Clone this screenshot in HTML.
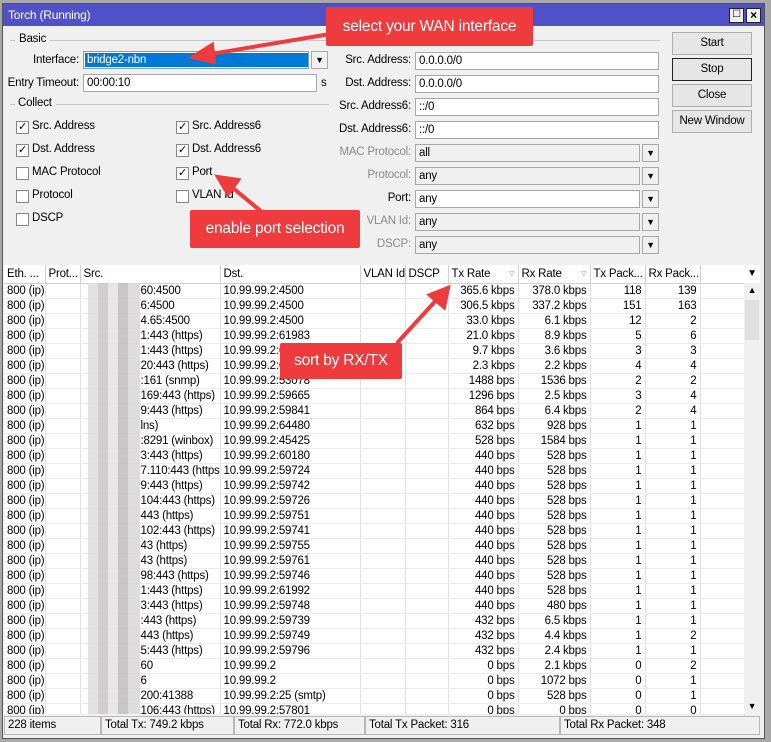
<!DOCTYPE html>
<html><head><meta charset="utf-8">
<style>
*{box-sizing:border-box;margin:0;padding:0}
body{width:771px;height:742px;background:#a9a9a9;font-family:"Liberation Sans",Arial,sans-serif;font-size:11.5px;color:#000;position:relative;overflow:hidden;letter-spacing:-0.2px}
.win{position:absolute;left:2px;top:3px;width:763px;height:736px;background:#f0f0f0;border:1px solid #555}
.title{position:absolute;left:3px;top:4px;width:761px;height:22px;background:#5050c8;color:#fff;font-size:12px;padding:4px 0 0 5px}
.tb{position:absolute;top:8px;width:15px;height:15px;background:#f0f0f0;border:1px solid #222}
.a{position:absolute;white-space:nowrap}
.lbl{position:absolute;text-align:right;white-space:nowrap}
.gray{color:#8a8a8a}
.inp{position:absolute;height:18px;background:#fff;border:1px solid #a8a8a8;padding:0 0 0 3px;line-height:16px;white-space:nowrap}
.dis{background:#f0f0f0}
.dd{position:absolute;width:17px;height:18px;border:1px solid #a8a8a8;background:#f0f0f0;text-align:center;font-size:9px;line-height:16px}
.cb{position:absolute;width:13px;height:13px;border:1px solid #888;background:#fff;font-size:11px;line-height:11px;text-align:center}
.grp{position:absolute;height:1px;background:#c8c8c8}
.btn{position:absolute;left:672px;width:80px;height:23px;border:1px solid #adadad;background:#e6e6e6;text-align:center;line-height:21px}
.red{position:absolute;background:#ef3b3e;color:#fff;font-size:15.5px;text-align:center;border-radius:2px}
table{position:absolute;left:4px;top:265px;width:740px;border-collapse:collapse;table-layout:fixed;background:#fff}
td,th{height:15px;font-weight:normal;white-space:nowrap;overflow:hidden;border-right:1px solid #e0e0e0;padding:0 3px;line-height:14px;text-align:left}
th{height:18px;background:#fff;border-right:1px solid #d0d0d0;border-bottom:1px solid #d0d0d0}
td.r{text-align:right}
tr.b td{border-bottom:1px solid #ececec}
.sb{position:absolute;left:744px;top:265px;width:16px;height:449px;background:#f0f0f0}
.status{position:absolute;top:716px;height:19px;border:1px solid #b8b8b8;padding:2px 0 0 3px;background:#f0f0f0}
</style></head><body>
<div class="win"></div>
<div class="title">Torch (Running)</div>
<div class="tb" style="left:729px;font-size:10px;line-height:12px;text-align:center">☐</div>
<div class="tb" style="left:746px;font-size:12px;line-height:12px;text-align:center;font-weight:bold">×</div>

<div class="grp" style="left:10px;top:40px;width:5px"></div><div class="a" style="left:19px;top:33px">Basic</div><div class="grp" style="left:50px;top:40px;width:610px"></div>
<div class="lbl" style="right:692px;top:54px">Interface:</div>
<div class="inp" style="left:83px;top:51px;width:226px;border-color:#7aa"><span style="background:#0078d7;color:#fff;display:block;margin:1px 0 0 -2px;padding-left:2px;height:14px;line-height:14px">bridge2-nbn</span></div>
<div class="dd" style="left:311px;top:51px">▼</div>
<div class="lbl" style="right:692px;top:77px">Entry Timeout:</div>
<div class="inp" style="left:83px;top:74px;width:234px">00:00:10</div>
<div class="a" style="left:321px;top:77px">s</div>
<div class="grp" style="left:10px;top:104px;width:5px"></div><div class="a" style="left:18px;top:97px">Collect</div><div class="grp" style="left:56px;top:104px;width:273px"></div>

<div class="cb" style="left:16px;top:121px">✓</div><div class="a" style="left:32px;top:120px">Src. Address</div>
<div class="cb" style="left:16px;top:144px">✓</div><div class="a" style="left:32px;top:143px">Dst. Address</div>
<div class="cb" style="left:16px;top:167px"></div><div class="a" style="left:32px;top:166px">MAC Protocol</div>
<div class="cb" style="left:16px;top:190px"></div><div class="a" style="left:32px;top:189px">Protocol</div>
<div class="cb" style="left:16px;top:213px"></div><div class="a" style="left:32px;top:212px">DSCP</div>
<div class="cb" style="left:176px;top:121px">✓</div><div class="a" style="left:192px;top:120px">Src. Address6</div>
<div class="cb" style="left:176px;top:144px">✓</div><div class="a" style="left:192px;top:143px">Dst. Address6</div>
<div class="cb" style="left:176px;top:167px">✓</div><div class="a" style="left:192px;top:166px">Port</div>
<div class="cb" style="left:176px;top:190px"></div><div class="a" style="left:192px;top:189px">VLAN Id</div>

<div class="lbl" style="right:360px;top:54px">Src. Address:</div><div class="inp" style="left:415px;top:52px;width:244px">0.0.0.0/0</div>
<div class="lbl" style="right:360px;top:77px">Dst. Address:</div><div class="inp" style="left:415px;top:75px;width:244px">0.0.0.0/0</div>
<div class="lbl" style="right:360px;top:100px">Src. Address6:</div><div class="inp" style="left:415px;top:98px;width:244px">::/0</div>
<div class="lbl" style="right:360px;top:123px">Dst. Address6:</div><div class="inp" style="left:415px;top:121px;width:244px">::/0</div>
<div class="lbl gray" style="right:360px;top:146px">MAC Protocol:</div><div class="inp dis" style="left:415px;top:144px;width:225px">all</div><div class="dd" style="left:642px;top:144px">▼</div>
<div class="lbl gray" style="right:360px;top:169px">Protocol:</div><div class="inp dis" style="left:415px;top:167px;width:225px">any</div><div class="dd" style="left:642px;top:167px">▼</div>
<div class="lbl" style="right:360px;top:192px">Port:</div><div class="inp" style="left:415px;top:190px;width:225px">any</div><div class="dd" style="left:642px;top:190px">▼</div>
<div class="lbl gray" style="right:360px;top:215px">VLAN Id:</div><div class="inp dis" style="left:415px;top:213px;width:225px">any</div><div class="dd" style="left:642px;top:213px">▼</div>
<div class="lbl gray" style="right:360px;top:238px">DSCP:</div><div class="inp dis" style="left:415px;top:236px;width:225px">any</div><div class="dd" style="left:642px;top:236px">▼</div>

<div class="btn" style="top:32px">Start</div>
<div class="btn" style="top:58px;border-color:#222">Stop</div>
<div class="btn" style="top:84px">Close</div>
<div class="btn" style="top:110px">New Window</div>

<table>
<colgroup><col style="width:41px"><col style="width:35px"><col style="width:140px"><col style="width:140px"><col style="width:45px"><col style="width:43px"><col style="width:70px"><col style="width:72px"><col style="width:55px"><col style="width:55px"><col style="width:44px"></colgroup>
<tr><th>Eth. ...</th><th>Prot...</th><th>Src.</th><th>Dst.</th><th>VLAN Id</th><th>DSCP</th><th>Tx Rate <span style="color:#bbb;float:right">▿</span></th><th>Rx Rate <span style="color:#bbb;float:right">▿</span></th><th>Tx Pack...</th><th>Rx Pack...</th><th></th></tr>
<tr class="b"><td>800 (ip)</td><td></td><td style="padding-left:60px">60:4500</td><td>10.99.99.2:4500</td><td></td><td></td><td class="r">365.6 kbps</td><td class="r">378.0 kbps</td><td class="r">118</td><td class="r">139</td><td></td></tr>
<tr class="b"><td>800 (ip)</td><td></td><td style="padding-left:60px">6:4500</td><td>10.99.99.2:4500</td><td></td><td></td><td class="r">306.5 kbps</td><td class="r">337.2 kbps</td><td class="r">151</td><td class="r">163</td><td></td></tr>
<tr class="b"><td>800 (ip)</td><td></td><td style="padding-left:60px">4.65:4500</td><td>10.99.99.2:4500</td><td></td><td></td><td class="r">33.0 kbps</td><td class="r">6.1 kbps</td><td class="r">12</td><td class="r">2</td><td></td></tr>
<tr class="b"><td>800 (ip)</td><td></td><td style="padding-left:60px">1:443 (https)</td><td>10.99.99.2:61983</td><td></td><td></td><td class="r">21.0 kbps</td><td class="r">8.9 kbps</td><td class="r">5</td><td class="r">6</td><td></td></tr>
<tr class="b"><td>800 (ip)</td><td></td><td style="padding-left:60px">1:443 (https)</td><td>10.99.99.2:61990</td><td></td><td></td><td class="r">9.7 kbps</td><td class="r">3.6 kbps</td><td class="r">3</td><td class="r">3</td><td></td></tr>
<tr class="b"><td>800 (ip)</td><td></td><td style="padding-left:60px">20:443 (https)</td><td>10.99.99.2:61991</td><td></td><td></td><td class="r">2.3 kbps</td><td class="r">2.2 kbps</td><td class="r">4</td><td class="r">4</td><td></td></tr>
<tr class="b"><td>800 (ip)</td><td></td><td style="padding-left:60px">:161 (snmp)</td><td>10.99.99.2:53078</td><td></td><td></td><td class="r">1488 bps</td><td class="r">1536 bps</td><td class="r">2</td><td class="r">2</td><td></td></tr>
<tr class="b"><td>800 (ip)</td><td></td><td style="padding-left:60px">169:443 (https)</td><td>10.99.99.2:59665</td><td></td><td></td><td class="r">1296 bps</td><td class="r">2.5 kbps</td><td class="r">3</td><td class="r">4</td><td></td></tr>
<tr class="b"><td>800 (ip)</td><td></td><td style="padding-left:60px">9:443 (https)</td><td>10.99.99.2:59841</td><td></td><td></td><td class="r">864 bps</td><td class="r">6.4 kbps</td><td class="r">2</td><td class="r">4</td><td></td></tr>
<tr class="b"><td>800 (ip)</td><td></td><td style="padding-left:60px">lns)</td><td>10.99.99.2:64480</td><td></td><td></td><td class="r">632 bps</td><td class="r">928 bps</td><td class="r">1</td><td class="r">1</td><td></td></tr>
<tr class="b"><td>800 (ip)</td><td></td><td style="padding-left:60px">:8291 (winbox)</td><td>10.99.99.2:45425</td><td></td><td></td><td class="r">528 bps</td><td class="r">1584 bps</td><td class="r">1</td><td class="r">1</td><td></td></tr>
<tr class="b"><td>800 (ip)</td><td></td><td style="padding-left:60px">3:443 (https)</td><td>10.99.99.2:60180</td><td></td><td></td><td class="r">440 bps</td><td class="r">528 bps</td><td class="r">1</td><td class="r">1</td><td></td></tr>
<tr class="b"><td>800 (ip)</td><td></td><td style="padding-left:60px">7.110:443 (https)</td><td>10.99.99.2:59724</td><td></td><td></td><td class="r">440 bps</td><td class="r">528 bps</td><td class="r">1</td><td class="r">1</td><td></td></tr>
<tr class="b"><td>800 (ip)</td><td></td><td style="padding-left:60px">9:443 (https)</td><td>10.99.99.2:59742</td><td></td><td></td><td class="r">440 bps</td><td class="r">528 bps</td><td class="r">1</td><td class="r">1</td><td></td></tr>
<tr class="b"><td>800 (ip)</td><td></td><td style="padding-left:60px">104:443 (https)</td><td>10.99.99.2:59726</td><td></td><td></td><td class="r">440 bps</td><td class="r">528 bps</td><td class="r">1</td><td class="r">1</td><td></td></tr>
<tr class="b"><td>800 (ip)</td><td></td><td style="padding-left:60px">443 (https)</td><td>10.99.99.2:59751</td><td></td><td></td><td class="r">440 bps</td><td class="r">528 bps</td><td class="r">1</td><td class="r">1</td><td></td></tr>
<tr class="b"><td>800 (ip)</td><td></td><td style="padding-left:60px">102:443 (https)</td><td>10.99.99.2:59741</td><td></td><td></td><td class="r">440 bps</td><td class="r">528 bps</td><td class="r">1</td><td class="r">1</td><td></td></tr>
<tr class="b"><td>800 (ip)</td><td></td><td style="padding-left:60px">43 (https)</td><td>10.99.99.2:59755</td><td></td><td></td><td class="r">440 bps</td><td class="r">528 bps</td><td class="r">1</td><td class="r">1</td><td></td></tr>
<tr class="b"><td>800 (ip)</td><td></td><td style="padding-left:60px">43 (https)</td><td>10.99.99.2:59761</td><td></td><td></td><td class="r">440 bps</td><td class="r">528 bps</td><td class="r">1</td><td class="r">1</td><td></td></tr>
<tr class="b"><td>800 (ip)</td><td></td><td style="padding-left:60px">98:443 (https)</td><td>10.99.99.2:59746</td><td></td><td></td><td class="r">440 bps</td><td class="r">528 bps</td><td class="r">1</td><td class="r">1</td><td></td></tr>
<tr class="b"><td>800 (ip)</td><td></td><td style="padding-left:60px">1:443 (https)</td><td>10.99.99.2:61992</td><td></td><td></td><td class="r">440 bps</td><td class="r">528 bps</td><td class="r">1</td><td class="r">1</td><td></td></tr>
<tr class="b"><td>800 (ip)</td><td></td><td style="padding-left:60px">3:443 (https)</td><td>10.99.99.2:59748</td><td></td><td></td><td class="r">440 bps</td><td class="r">480 bps</td><td class="r">1</td><td class="r">1</td><td></td></tr>
<tr class="b"><td>800 (ip)</td><td></td><td style="padding-left:60px">:443 (https)</td><td>10.99.99.2:59739</td><td></td><td></td><td class="r">432 bps</td><td class="r">6.5 kbps</td><td class="r">1</td><td class="r">1</td><td></td></tr>
<tr class="b"><td>800 (ip)</td><td></td><td style="padding-left:60px">443 (https)</td><td>10.99.99.2:59749</td><td></td><td></td><td class="r">432 bps</td><td class="r">4.4 kbps</td><td class="r">1</td><td class="r">2</td><td></td></tr>
<tr class="b"><td>800 (ip)</td><td></td><td style="padding-left:60px">5:443 (https)</td><td>10.99.99.2:59796</td><td></td><td></td><td class="r">432 bps</td><td class="r">2.4 kbps</td><td class="r">1</td><td class="r">1</td><td></td></tr>
<tr class="b"><td>800 (ip)</td><td></td><td style="padding-left:60px">60</td><td>10.99.99.2</td><td></td><td></td><td class="r">0 bps</td><td class="r">2.1 kbps</td><td class="r">0</td><td class="r">2</td><td></td></tr>
<tr class="b"><td>800 (ip)</td><td></td><td style="padding-left:60px">6</td><td>10.99.99.2</td><td></td><td></td><td class="r">0 bps</td><td class="r">1072 bps</td><td class="r">0</td><td class="r">1</td><td></td></tr>
<tr class="b"><td>800 (ip)</td><td></td><td style="padding-left:60px">200:41388</td><td>10.99.99.2:25 (smtp)</td><td></td><td></td><td class="r">0 bps</td><td class="r">528 bps</td><td class="r">0</td><td class="r">1</td><td></td></tr>
<tr class="b"><td style="height:11px;vertical-align:top">800 (ip)</td><td></td><td style="padding-left:60px;vertical-align:top">106:443 (https)</td><td style="vertical-align:top">10.99.99.2:57801</td><td></td><td></td><td class="r" style="vertical-align:top">0 bps</td><td class="r" style="vertical-align:top">0 bps</td><td class="r" style="vertical-align:top">0</td><td class="r" style="vertical-align:top">0</td><td></td></tr>
</table>
<div style="position:absolute;left:88px;top:283px;width:52px;height:431px;background:repeating-linear-gradient(90deg,#ddd 0 10px,#c9c6c8 10px 20px,#e4e2e3 20px 30px,#bdbdbd 30px 40px,#d8d6d7 40px 52px);opacity:.85"></div>
<div style="position:absolute;left:4px;top:714px;width:740px;height:2px;background:#f0f0f0"></div>
<div class="sb"><div style="height:18px;background:#fff;text-align:center;font-size:10px;line-height:18px">▼</div><div style="height:15px;text-align:center;font-size:9px;line-height:15px">▲</div><div style="margin:2px 0 0 1px;width:14px;height:40px;background:#e0e0e0"></div><div style="position:absolute;bottom:0;width:16px;height:15px;text-align:center;font-size:9px;line-height:15px">▼</div></div>

<div class="status" style="left:4px;width:97px">228 items</div>
<div class="status" style="left:101px;width:133px">Total Tx: 749.2 kbps</div>
<div class="status" style="left:234px;width:131px">Total Rx: 772.0 kbps</div>
<div class="status" style="left:365px;width:195px">Total Tx Packet: 316</div>
<div class="status" style="left:560px;width:200px">Total Rx Packet: 348</div>

<svg style="position:absolute;left:0;top:0" width="771" height="742">
<g fill="#ef3b3e" stroke="#ef3b3e" stroke-width="4" stroke-linecap="round">
<line x1="330" y1="34" x2="205" y2="55"/><polygon points="193,57 212,45 214,62"/>
<line x1="262" y1="212" x2="228" y2="184"/><polygon points="218,177 238,180 228,194"/>
<line x1="398" y1="342" x2="440" y2="296"/><polygon points="448,288 444,307 430,295"/>
</g></svg>
<div class="red" style="left:326px;top:7px;width:207px;height:39px;line-height:39px">select your WAN interface</div>
<div class="red" style="left:190px;top:210px;width:170px;height:38px;line-height:38px">enable port selection</div>
<div class="red" style="left:280px;top:343px;width:122px;height:36px;line-height:36px">sort by RX/TX</div>
</body></html>
